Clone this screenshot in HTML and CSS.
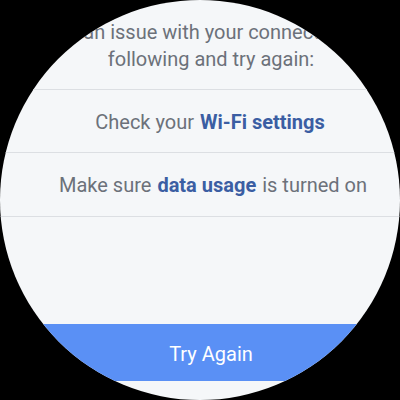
FILE: index.html
```html
<!DOCTYPE html>
<html>
<head>
    <meta charset="utf-8" />
    <title>Connection problem</title>
    <link rel="stylesheet" href="styles.css">
</head>
<body>
    <div class="watch">
        <div class="screen">
            <p class="intro">
                <span class="first-line">There was an issue with your connection. Try the</span>
                <span>following and try again:</span>
            </p>
            <div class="tips">
                <div class="tip">Check your <b class="link">Wi-Fi settings</b></div>
                <div class="tip">Make sure <b class="link">data usage</b> is turned on</div>
            </div>
            <div class="spacer"></div>
            <button class="retry">Try Again</button>
        </div>
    </div>
</body>
</html>
```

FILE: styles.css
```css
body {
    margin: 0;
    background-color: #000;
    font-family: Roboto, "Liberation Sans", sans-serif;
}

.watch {
    width: 400px;
    height: 400px;
    border-radius: 50%;
    overflow: hidden;
    background-color: #f5f7f9;
}

.screen {
    display: flex;
    flex-direction: column;
}

.intro {
    margin: 0;
    padding: 19px 0 16px 22px;
    font-size: 20px;
    line-height: 27px;
    color: #6c717a;
    text-align: center;
    white-space: nowrap;
    display: flex;
    flex-direction: column;
    align-items: center;
}

.first-line {
    padding-right: 18px;
}

.tips {
    border-top: 1px solid #dcdfe3;
}

.tip {
    height: 63px;
    display: flex;
    align-items: center;
    justify-content: center;
    padding: 1px 0 0 26px;
    box-sizing: border-box;
    border-bottom: 1px solid #dcdfe3;
    font-size: 20px;
    color: #6c717a;
    white-space: nowrap;
}

.tip + .tip {
    height: 64px;
}

.link {
    color: #3b5ea3;
    font-weight: bold;
    margin: 0 6px;
}

.spacer {
    height: 107px;
}

.retry {
    height: 57px;
    border: none;
    padding: 3px 0 0 22px;
    background-color: #5a90f5;
    color: #fff;
    font-family: Roboto, "Liberation Sans", sans-serif;
    font-size: 20px;
}
```
